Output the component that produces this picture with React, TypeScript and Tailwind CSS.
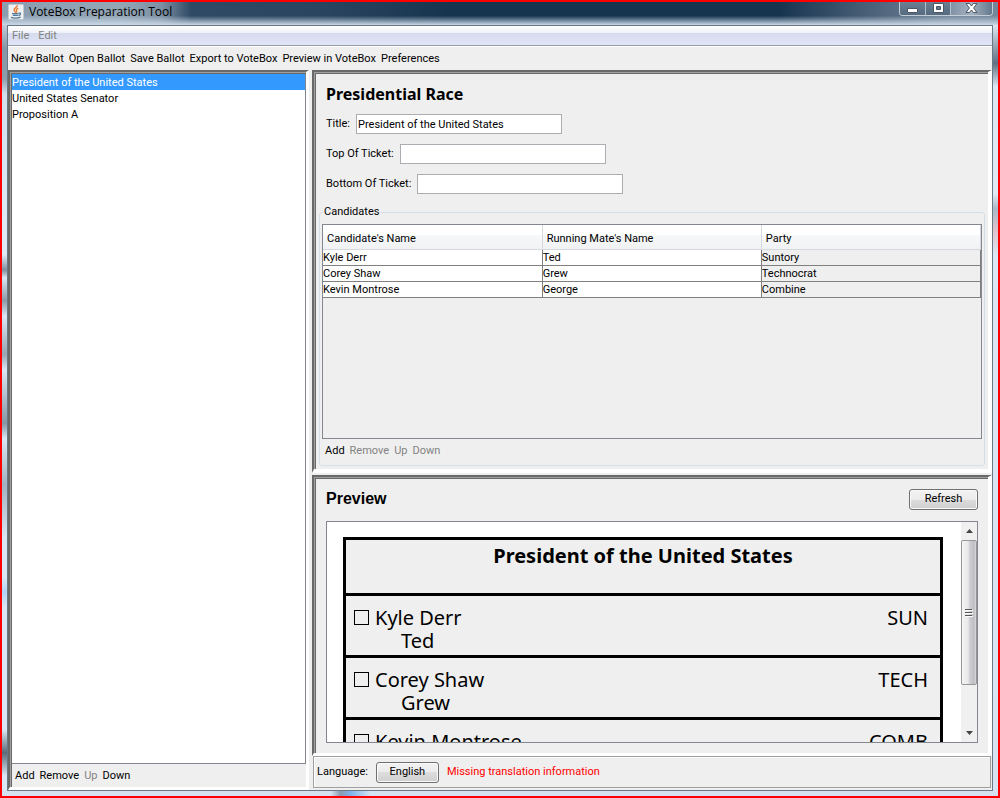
import React from "react";

const candidates = [
  { name: "Kyle Derr", mate: "Ted", party: "Suntory" },
  { name: "Corey Shaw", mate: "Grew", party: "Technocrat" },
  { name: "Kevin Montrose", mate: "George", party: "Combine" },
];
const ballot = [
  { name: "Kyle Derr", mate: "Ted", abbr: "SUN" },
  { name: "Corey Shaw", mate: "Grew", abbr: "TECH" },
  { name: "Kevin Montrose", mate: "", abbr: "COMB" },
];
const tools = ["New Ballot", "Open Ballot", "Save Ballot", "Export to VoteBox", "Preview in VoteBox", "Preferences"];
const races = ["President of the United States", "United States Senator", "Proposition A"];

function JavaIcon() {
  return (
    <svg width="16" height="16" viewBox="0 0 16 16" fill="none" aria-hidden="true">
      <rect x="0.5" y="0.5" width="15" height="15" rx="1" fill="#eef0f2" stroke="#c3c9cf" />
      <path d="M9.2 1.2C9.8 3.2 5.6 4.2 6.2 6.2C6.5 7.2 7.6 7.4 7.2 8.8" stroke="#e8782a" strokeWidth="1.5" />
      <path d="M10.4 4.2C8.8 4.8 8 5.6 8.6 6.6C9.2 7.4 8.8 8 8.4 8.6" stroke="#e8782a" strokeWidth="1.2" />
      <path d="M4 9.6H10.4M4.8 11.4H9.8M10.6 9.2C13.4 8.4 13 11 10.4 11.6" stroke="#4e7896" strokeWidth="1.2" />
      <path d="M3 13.4C5 14.4 10 14.4 12.6 13.2" stroke="#4e7896" strokeWidth="1.3" />
    </svg>
  );
}

function WindowButtons() {
  return (
    <div className="mr-[5px] flex h-[14px] overflow-hidden rounded-b-[4px] border border-t-0 border-[#c3ced8] bg-[#62758a]">
      <button aria-label="Minimize" className="flex w-[26px] items-center justify-center border-r border-[#b4c0cc] bg-linear-to-b from-[#6c7f93] to-[#566b80]">
        <svg width="13" height="12" viewBox="0 0 13 12" aria-hidden="true"><rect x="1.5" y="5.5" width="10" height="4" rx="0.5" fill="#fff" stroke="#4b5767" /></svg>
      </button>
      <button aria-label="Maximize" className="flex w-[25px] items-center justify-center border-r border-[#b4c0cc] bg-linear-to-b from-[#6c7f93] to-[#566b80]">
        <svg width="13" height="12" viewBox="0 0 13 12" aria-hidden="true"><path d="M1.5 .5h10v9h-10zM4.5 3.5v3h4v-3z" fill="#fff" fillRule="evenodd" stroke="#4b5767" /></svg>
      </button>
      <button aria-label="Close" className="flex w-[41px] items-center justify-center bg-linear-to-r from-[#8293a6] via-[#a3b1bf] to-[#64788c]">
        <svg width="13" height="12" viewBox="0 0 13 12" aria-hidden="true"><path d="M1 .5h3.5l2 2.5 2-2.5H12L8.6 5l3.4 4.5H8.5l-2-2.5-2 2.5H1L4.4 5z" fill="#fff" stroke="#4b5767" /></svg>
      </button>
    </div>
  );
}

function Field({ id, label, value = "" }: { id: string; label: string; value?: string }) {
  return (
    <div className="flex h-[20px] items-center gap-[6px]">
      <label htmlFor={id}>{label}</label>
      <input id={id} defaultValue={value} className="h-[20px] w-[206px] border border-[#abadb3] bg-white px-[1px]" />
    </div>
  );
}

const pushButton =
  "h-[21px] rounded-[3px] border border-[#707070] bg-[linear-gradient(#f2f2f2,#ebebeb_50%,#dddddd_50%,#cfcfcf)] shadow-[inset_0_0_0_1px_#fafafa]";

function Panel({ className, inner, children }: { className: string; inner: string; children: React.ReactNode }) {
  return (
    <section className={`flex flex-col border-t-2 border-l-2 border-t-[#696969] border-r-white border-b-white border-l-[#696969] ${className}`}>
      <div className="flex min-h-0 flex-1 flex-col border-t border-l border-[#a0a0a0]">
        <div className={`flex min-h-0 flex-1 flex-col border-t border-l border-[#696969] ${inner}`}>{children}</div>
      </div>
    </section>
  );
}

function Rail() {
  return (
    <div className="flex w-[16px] shrink-0 flex-col bg-[#f0f0f0]">
      <button aria-label="Scroll up" className="flex h-[18px] items-center justify-center">
        <svg width="7" height="4" viewBox="0 0 7 4" aria-hidden="true"><path d="M0 4L3.5 0L7 4z" fill="#444" /></svg>
      </button>
      <div className="flex grow-[146] items-center justify-center rounded-[2px] border border-[#979797] bg-[linear-gradient(90deg,#f5f5f5,#e8e8ea_45%,#d4d4d7_50%,#bdbdc2_85%,#dcdcdc)]">
        <svg width="8" height="9" viewBox="0 0 8 9" aria-hidden="true"><path d="M0 1.5h7M0 4.5h7M0 7.5h7" stroke="#555" /><path d="M1 2.5h7M1 5.5h7M1 8.5h7" stroke="#fff" /></svg>
      </div>
      <div className="grow-[42]" />
      <button aria-label="Scroll down" className="flex h-[18px] items-center justify-center">
        <svg width="7" height="4" viewBox="0 0 7 4" aria-hidden="true"><path d="M0 0h7L3.5 4z" fill="#444" /></svg>
      </button>
    </div>
  );
}

export default function App() {
  return (
    <div className="flex h-screen flex-col border-2 border-[#ff0000] bg-[#d5e3f1] font-[Roboto,sans-serif] text-[11px] leading-[16px] text-black">
      <header className="flex h-[23px] shrink-0 items-start justify-between bg-[linear-gradient(transparent_60%,#c9d8e6),linear-gradient(90deg,#8a9eb0,#93a6b6_12%,#7d90a3_16%,#2f4a64_19%,#2a4560_32%,#17344f_45%,#17344f_78%,#4a6078_87%,#74879a_95%)]">
        <div className="flex items-center gap-[5px] pt-[2px] pl-[6px]">
          <JavaIcon />
          <h1 className="font-['Open_Sans',sans-serif] text-[12px]">VoteBox Preparation Tool</h1>
        </div>
        <WindowButtons />
      </header>

      <div className="flex min-h-0 flex-1">
        <div className="w-[5px] shrink-0 bg-[linear-gradient(#c0ccd8,#8596a6_3%,#8c9dac_7%,#d3e0ec_9%,#e0ebf5_30%,#7f8f9e_32%,#dbe7f2_33%,#8c9aa8_36%,#dbe7f2_38%,#97a5b2_43%,#dbe7f2_45%,#8796a5_52%,#dbe7f2_54%,#a3b2c0_60%,#dbe7f2_67%,#dbe7f2_72%,#b3d2f6_74%,#dbe7f2_76%,#dbe7f2_92%,#5a6b7b_95%,#dbe7f2_98%)]" />

        <div className="flex min-h-0 min-w-0 flex-1 flex-col border border-[#6b7783] bg-[#efefef]">
          <nav className="flex h-[20px] shrink-0 items-center gap-[9px] border-b border-[#9a9ca6] bg-[linear-gradient(#ffffff,#eef1f7_36%,#d5dbed_36%,#e0e5f7)] px-1 pt-px text-[#838383]">
            <button>File</button>
            <button>Edit</button>
          </nav>
          <div className="flex h-[24px] shrink-0 items-center gap-[5px] border-t border-white px-[3px]">
            {tools.map((t) => <button key={t}>{t}</button>)}
          </div>

          <main className="flex min-h-0 flex-1">
            <Panel className="w-[301px] shrink-0 border-r-3 border-b-3" inner="">
              <ul className="min-h-0 flex-1 border-r border-b border-[#828790] bg-white">
                {races.map((r, i) => (
                  <li key={r} className={i === 0 ? "h-[16px] bg-[#3399ff] leading-[18px] text-white" : "h-[16px] leading-[18px]"}>{r}</li>
                ))}
              </ul>
              <div className="flex h-[23px] shrink-0 items-center gap-[5px] px-[3px]">
                <button>Add</button>
                <button>Remove</button>
                <button className="text-[#838383]">Up</button>
                <button>Down</button>
              </div>
            </Panel>

            <div className="ml-[3px] flex min-w-0 flex-1 flex-col">
              <Panel className="border-r-4 border-b-4" inner="px-[3px] pb-[3px]">
                <h2 className="px-[7px] pt-[8px] font-['Noto_Sans',sans-serif] text-[16px] leading-[24px] font-bold">Presidential Race</h2>
                <div className="flex flex-col gap-[10px] px-[7px] pt-[8px]">
                  <Field id="title" label="Title:" value="President of the United States" />
                  <Field id="top" label="Top Of Ticket:" />
                  <Field id="bottom" label="Bottom Of Ticket:" />
                </div>
                <fieldset className="mt-[10px] rounded-[3px] border border-[#d5dfe5] px-[2px] pb-[6px]">
                  <legend className="ml-[1px] px-[1px]">Candidates</legend>
                  <div className="mt-[4px] h-[215px] border border-[#828790]">
                    <table className="w-full table-fixed border-collapse">
                      <thead>
                        <tr className="h-[24px] bg-[linear-gradient(#ffffff_40%,#f7f8fa_42%,#f1f2f4)]">
                          {["Candidate's Name", "Running Mate's Name", "Party"].map((h) => (
                            <th key={h} className="border-r border-b border-[#d5d8dc] pt-[4px] pl-[4px] text-left font-normal">{h}</th>
                          ))}
                        </tr>
                      </thead>
                      <tbody>
                        {candidates.map((c) => (
                          <tr key={c.name} className="h-[16px] leading-[15px]">
                            <td className="border-r border-b border-[#808080] bg-white">{c.name}</td>
                            <td className="border-r border-b border-[#808080] bg-white">{c.mate}</td>
                            <td className="border-r border-b border-[#808080]">{c.party}</td>
                          </tr>
                        ))}
                      </tbody>
                    </table>
                  </div>
                  <div className="flex gap-[5px] px-[3px] pt-[4px] text-[#838383]">
                    <button className="text-black">Add</button>
                    <button>Remove</button>
                    <button>Up</button>
                    <button>Down</button>
                  </div>
                </fieldset>
              </Panel>

              <Panel className="mt-[2px] min-h-0 flex-1 border-r-4 border-b-3" inner="px-[10px] pb-[10px]">
                <div className="flex items-center justify-between pt-[9px] pb-[11px]">
                  <h2 className="font-['Liberation_Sans',sans-serif] text-[16px] leading-[22px] font-bold">Preview</h2>
                  <button className={`${pushButton} w-[69px]`}>Refresh</button>
                </div>
                <div className="flex min-h-0 flex-1 border border-[#828790] bg-white">
                  <div className="min-w-0 flex-1 overflow-hidden pt-[15px] pr-[18px] pl-4 font-['Noto_Sans',sans-serif] text-[20px] leading-[23px]">
                    <div className="divide-y-3 divide-black border-3 border-black bg-[#efefef]">
                      <h3 className="h-[56px] pt-[4px] text-center font-bold">President of the United States</h3>
                      {ballot.map((c, i) => (
                        <div key={c.name} className="flex h-[62px] justify-between px-[12px] pt-[10px]">
                          <div className="flex gap-[6px]">
                            <input id={`choice-${i}`} type="checkbox" className="mt-[4px] -ml-1 size-[15px] appearance-none border border-black" />
                            <label htmlFor={`choice-${i}`} className="flex flex-col">
                              <span>{c.name}</span>
                              {c.mate && <span className="pl-[26px]">{c.mate}</span>}
                            </label>
                          </div>
                          <span>{c.abbr}</span>
                        </div>
                      ))}
                    </div>
                  </div>
                  <Rail />
                </div>
              </Panel>

              <footer className="mx-[1px] mb-[2px] flex h-[32px] shrink-0 items-center gap-[8px] border border-[#a0a0a0] px-[3px] shadow-[inset_1px_1px_0_white]">
                <span>Language:</span>
                <button className={`${pushButton} w-[63px]`}>English</button>
                <span className="text-[#ff0000]">Missing translation information</span>
              </footer>
            </div>
          </main>
        </div>

        <div className="w-[5px] shrink-0 bg-[linear-gradient(#dce6f0,#5f7182_5%,#dbe7f2_8%,#dfeaf4_22%,#a9b8c6_24%,#e0c3cc_27%,#dbe7f2_30%,#d6e4f2)]" />
      </div>
      <div className="h-[5px] shrink-0 bg-[linear-gradient(90deg,#d5e3f1_33%,#8a9bb0_34%,#7fb2ec_35%,#d5e3f1_37%)]" />
    </div>
  );
}
